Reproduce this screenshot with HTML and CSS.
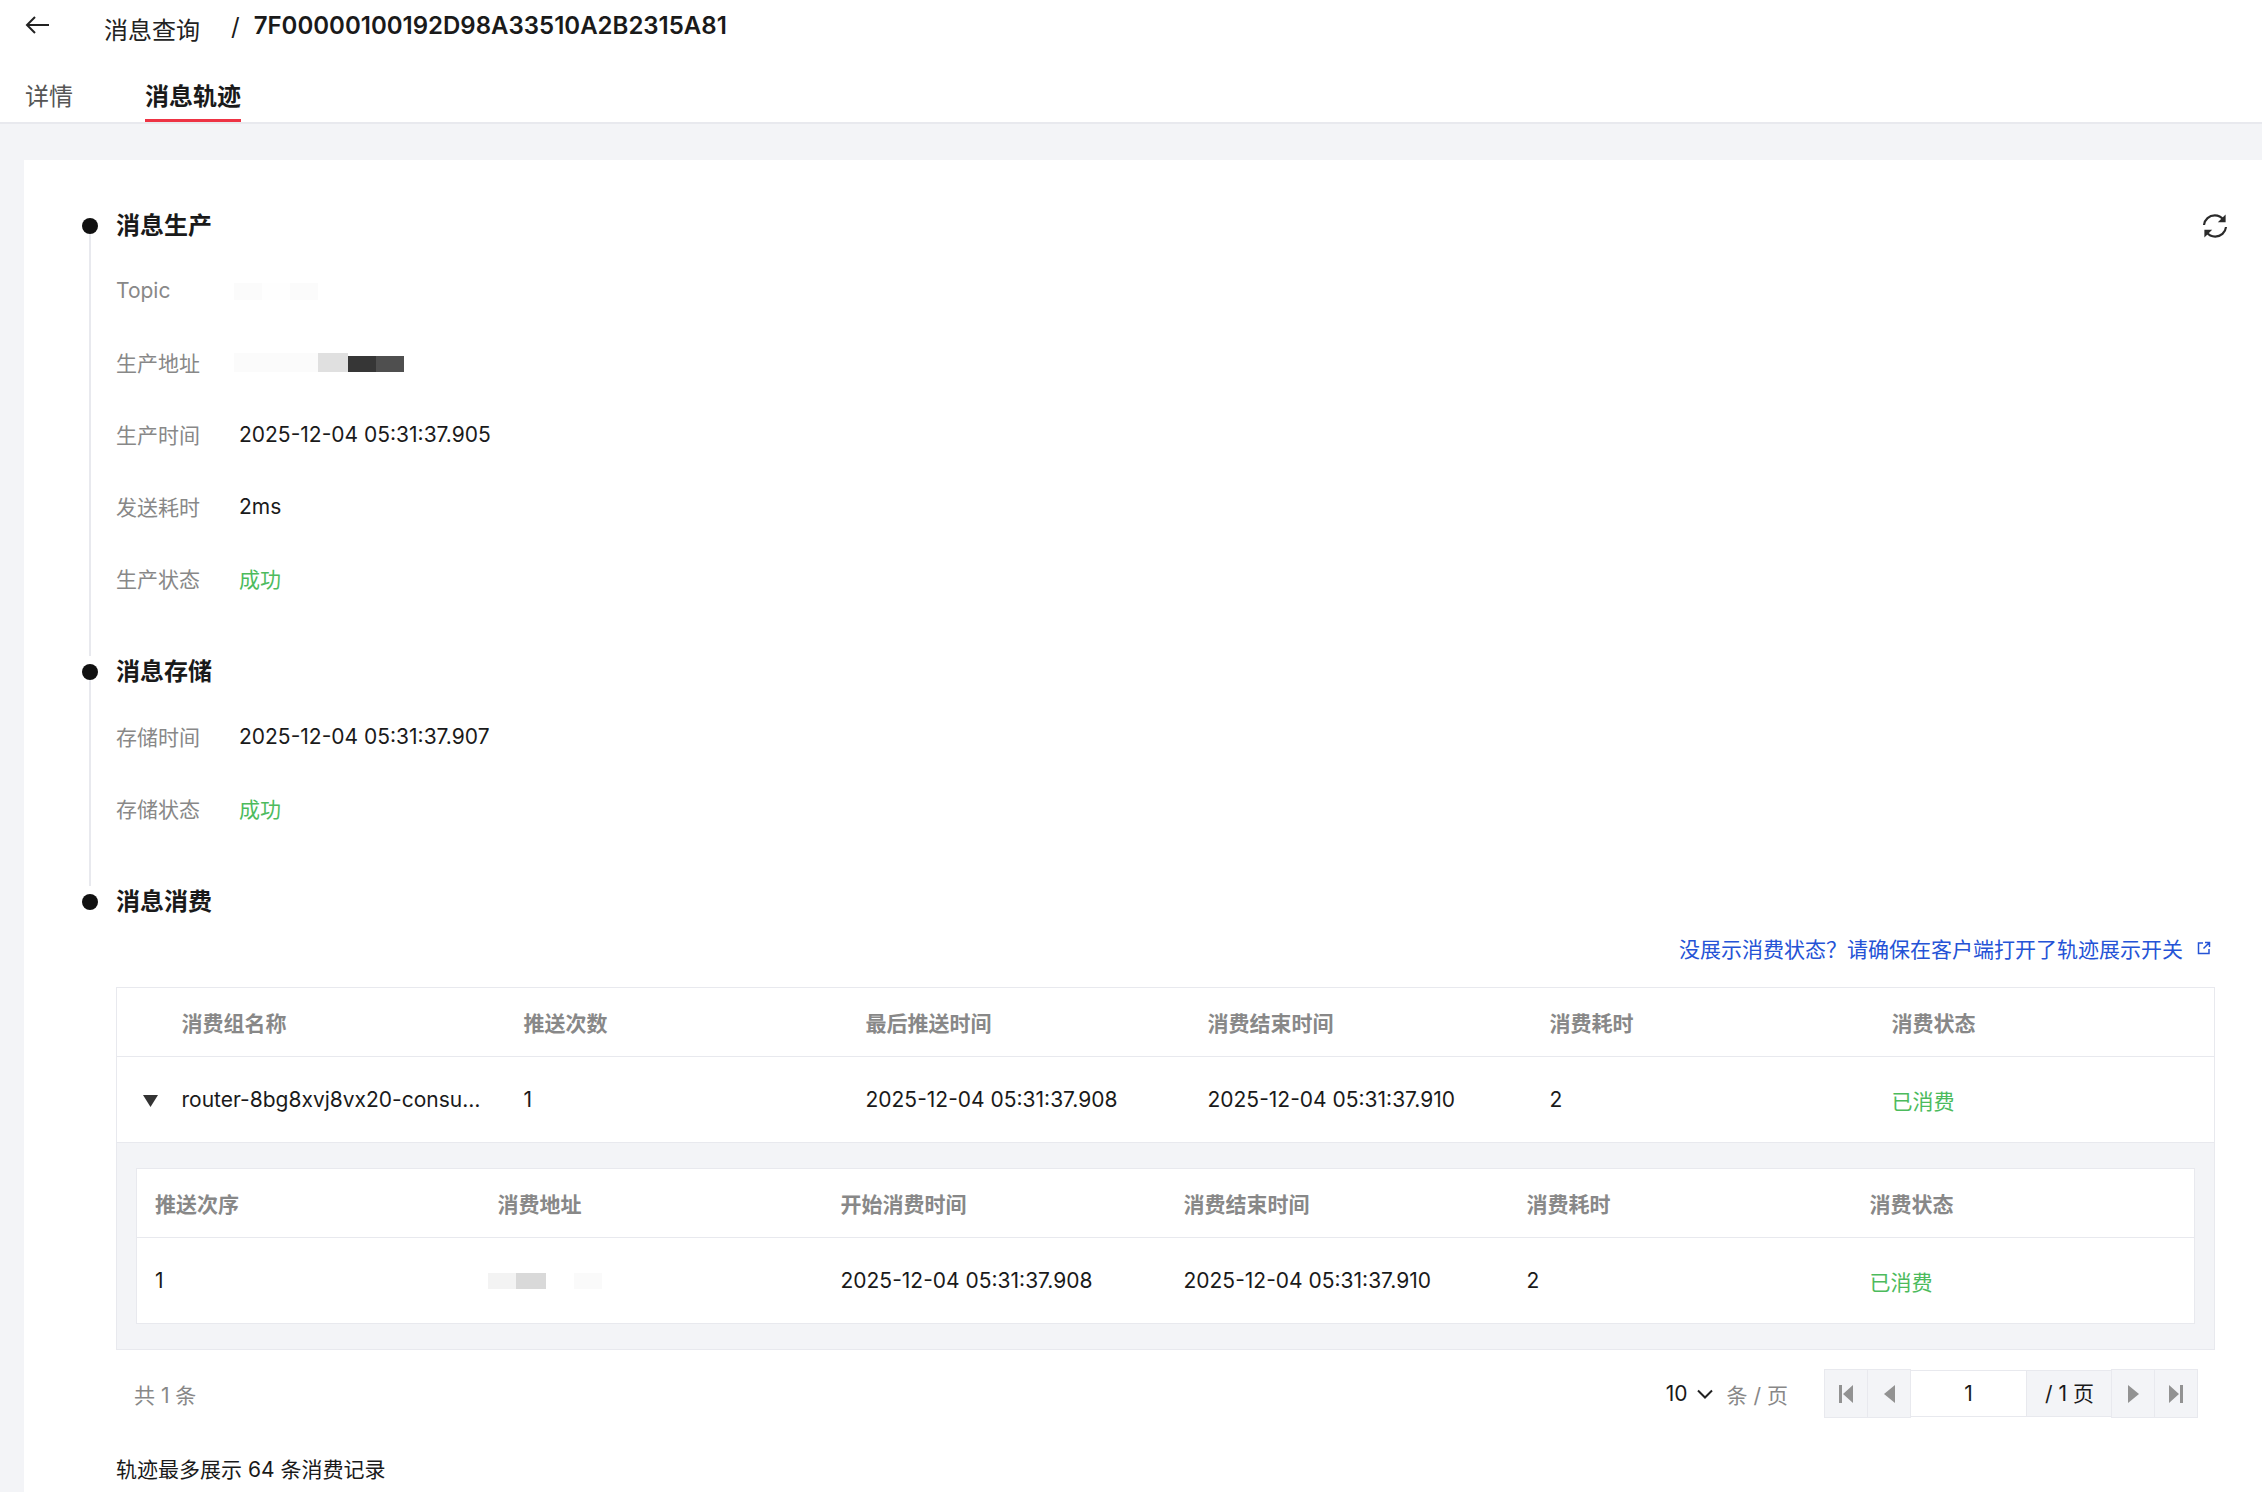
FILE: index.html
```html
<!DOCTYPE html>
<html lang="zh-CN">
<head>
  <meta charset="UTF-8" />
  <title>消息轨迹</title>
  <link rel="stylesheet" href="styles.css">
</head>
<body>
  <header class="page-head">
    <div class="crumbs">
      <svg class="back-icon" viewBox="0 0 24 20" width="24" height="20" fill="none" stroke="#222" stroke-width="2"><path d="M24 10H2M10 2l-8 8 8 8"/></svg>
      <span class="crumb-parent">消息查询</span>
      <span class="crumb-sep">/</span>
      <span class="crumb-id">7F00000100192D98A33510A2B2315A81</span>
    </div>
    <nav class="tabs">
      <a class="tab">详情</a>
      <a class="tab active">消息轨迹</a>
    </nav>
  </header>

  <main class="content">
    <section class="card">
      <svg class="refresh-icon" viewBox="0 0 26 26" width="26" height="26" fill="none" stroke="#2b2b2b" stroke-width="2.2">
        <path d="M2 12C2.6 6.4 7.2 2.4 12.8 2.4c3.600 0 6.700 1.700 8.700 4.400"/>
        <path d="M24 14c-.6 5.600-5.200 9.600-10.800 9.600-3.600 0-6.700-1.700-8.700-4.400"/>
        <path d="M23.600 1.500v7.800h-7.800z" fill="#2b2b2b" stroke="none"/>
        <path d="M2.400 24.500v-7.800h7.800z" fill="#2b2b2b" stroke="none"/>
      </svg>

      <div class="step">
        <div class="rail"><i class="dot"></i><i class="line"></i></div>
        <div class="step-body">
          <h2 class="step-title">消息生产</h2>
          <div class="row">
            <span class="label">Topic</span>
            <span class="mosaic mosaic-topic"><i></i><i></i><i></i></span>
          </div>
          <div class="row">
            <span class="label">生产地址</span>
            <span class="mosaic mosaic-addr"><i></i><i></i><i></i><i></i></span>
          </div>
          <div class="row"><span class="label">生产时间</span><span class="value">2025-12-04 05:31:37.905</span></div>
          <div class="row"><span class="label">发送耗时</span><span class="value">2ms</span></div>
          <div class="row"><span class="label">生产状态</span><span class="value ok">成功</span></div>
        </div>
      </div>

      <div class="step">
        <div class="rail"><i class="dot"></i><i class="line"></i></div>
        <div class="step-body">
          <h2 class="step-title">消息存储</h2>
          <div class="row"><span class="label">存储时间</span><span class="value">2025-12-04 05:31:37.907</span></div>
          <div class="row"><span class="label">存储状态</span><span class="value ok">成功</span></div>
        </div>
      </div>

      <div class="step last">
        <div class="rail"><i class="dot"></i></div>
        <div class="step-body">
          <h2 class="step-title">消息消费</h2>
          <div class="tip-row">
            <a class="tip-link">没展示消费状态？请确保在客户端打开了轨迹展示开关</a>
            <svg class="link-icon" viewBox="0 0 14 14" width="14" height="14" fill="none" stroke="#2553d6" stroke-width="1.500"><path d="M6 2H1.500v10.500H12V8M8 1.500h4.500V6M12.500 1.500L6.500 7.500"/></svg>
          </div>

          <table class="grid outer">
            <colgroup><col class="c-exp"><col class="c-w"><col class="c-w"><col class="c-w"><col class="c-w"><col class="c-w"><col></colgroup>
            <thead>
              <tr><th></th><th>消费组名称</th><th>推送次数</th><th>最后推送时间</th><th>消费结束时间</th><th>消费耗时</th><th>消费状态</th></tr>
            </thead>
            <tbody>
              <tr>
                <td class="exp"><svg viewBox="0 0 15 12" width="15" height="12"><path d="M0 0h15L7.500 12z" fill="#333"/></svg></td>
                <td><div class="ellipsis">router-8bg8xvj8vx20-consumer-group</div></td>
                <td>1</td>
                <td>2025-12-04 05:31:37.908</td>
                <td>2025-12-04 05:31:37.910</td>
                <td>2</td>
                <td class="ok">已消费</td>
              </tr>
              <tr class="expanded">
                <td colspan="7">
                  <table class="grid inner">
                    <colgroup><col class="n-1"><col class="n-w"><col class="n-w"><col class="n-w"><col class="n-w"><col></colgroup>
                    <thead>
                      <tr><th>推送次序</th><th>消费地址</th><th>开始消费时间</th><th>消费结束时间</th><th>消费耗时</th><th>消费状态</th></tr>
                    </thead>
                    <tbody>
                      <tr>
                        <td>1</td>
                        <td><span class="mosaic mosaic-ip"><i></i><i></i><i></i></span></td>
                        <td>2025-12-04 05:31:37.908</td>
                        <td>2025-12-04 05:31:37.910</td>
                        <td>2</td>
                        <td class="ok">已消费</td>
                      </tr>
                    </tbody>
                  </table>
                </td>
              </tr>
            </tbody>
          </table>

          <div class="table-foot">
            <span class="total">共 1 条</span>
            <div class="size-picker">
              <span class="size-num">10</span>
              <svg viewBox="0 0 16 10" width="16" height="10" fill="none" stroke="#222" stroke-width="2"><path d="M1 1.500l7 7 7-7"/></svg>
              <span class="size-unit">条 / 页</span>
            </div>
            <div class="pager">
              <button class="pg-btn"><svg viewBox="0 0 14 18" width="14" height="18" fill="#929292"><path d="M0 0h3v18H0zM14 0v18L4 9z"/></svg></button>
              <button class="pg-btn"><svg viewBox="0 0 11 18" width="11" height="18" fill="#929292"><path d="M11 0v18L0 9z"/></svg></button>
              <div class="pg-input">1</div>
              <div class="pg-total">/ 1 页</div>
              <button class="pg-btn"><svg viewBox="0 0 11 18" width="11" height="18" fill="#929292"><path d="M0 0v18l11-9z"/></svg></button>
              <button class="pg-btn"><svg viewBox="0 0 14 18" width="14" height="18" fill="#929292"><path d="M11 0h3v18h-3zM0 0v18l10-9z"/></svg></button>
            </div>
          </div>

          <p class="note">轨迹最多展示 64 条消费记录</p>
        </div>
      </div>
    </section>
  </main>
</body>
</html>
```

FILE: styles.css
```css
:root {
  --bg-page: #f3f4f7;
  --border: #e8e9ee;
  --text: #1a1a1a;
  --text-grey: #888888;
  --green: #4cbb5c;
  --blue: #2553d6;
  --red: #ee3344;
}
*, *::before, *::after {
  box-sizing: border-box;
}
html, body {
  margin: 0;
  height: 100%;
}
body {
  display: flex;
  flex-direction: column;
  height: 1492px;
  overflow: hidden;
  background: var(--bg-page);
  color: var(--text);
  font-family: Inter, "Noto Sans CJK SC", sans-serif;
  font-size: 21px;
}

/* header */
.page-head {
  height: 124px;
  background: #fff;
  border-bottom: 2px solid var(--border);
}
.crumbs {
  display: flex;
  align-items: flex-start;
  height: 72px;
  padding-left: 25px;
}
.back-icon {
  margin-top: 15px;
}
.crumb-parent {
  margin: 13px 0 0 55px;
  font-size: 24px;
  line-height: 36px;
  color: #222;
}
.crumb-sep {
  margin: 9px 0 0 31px;
  font-size: 24px;
  line-height: 36px;
}
.crumb-id {
  margin: 8px 0 0 14px;
  font-size: 24px;
  line-height: 36px;
  font-weight: 600;
}
.tabs {
  display: flex;
  gap: 72px;
  padding-left: 25px;
}
.tab {
  height: 50px;
  font-size: 24px;
  line-height: 50px;
  color: #555;
  margin-top: 0;
}
.tab.active {
  color: var(--text);
  font-weight: 600;
  border-bottom: 3px solid var(--red);
}

/* card + timeline */
.content {
  flex: 1;
  padding: 36px 0 0 24px;
  min-height: 0;
}
.card {
  position: relative;
  height: 100%;
  padding: 50px 47px 0 58px;
  background: #fff;
}
.refresh-icon {
  position: absolute;
  top: 53px;
  right: 34px;
}
.step {
  display: flex;
  gap: 18px;
  padding-bottom: 0;
}
.rail {
  display: flex;
  flex-direction: column;
  align-items: center;
  width: 16px;
  flex: none;
  padding-top: 8px;
}
.dot {
  display: block;
  width: 16px;
  height: 16px;
  border-radius: 50%;
  background: #111;
}
.line {
  display: block;
  flex: 1;
  width: 2px;
  background: var(--border);
}
.step-body {
  flex: 1;
  min-width: 0;
  padding-bottom: 42px;
}
.step.last .step-body {
  padding-bottom: 0;
}
.step-title {
  margin: 0 0 12px;
  font-size: 24px;
  line-height: 32px;
  font-weight: 700;
}
.row {
  display: flex;
  align-items: center;
  height: 72px;
}
.label {
  width: 123px;
  color: var(--text-grey);
}
.ok {
  color: var(--green);
}

/* masked values */
.mosaic {
  display: flex;
  position: relative;
}
.mosaic i {
  display: block;
}
.mosaic-topic {
  margin-left: -5px;
  margin-top: 3px;
  height: 17px;
}
.mosaic-topic i {
  width: 28px;
  background: #fbfbfb;
}
.mosaic-topic i:nth-child(2) {
  background: #fefefe;
}
.mosaic-addr {
  margin-left: -5px;
  height: 19px;
}
.mosaic-addr i:nth-child(1) {
  width: 84px;
  background: #fbfbfb;
}
.mosaic-addr i:nth-child(2) {
  width: 30px;
  background: #e0e0e0;
}
.mosaic-addr i:nth-child(3) {
  width: 28px;
  margin-top: 3px;
  background: #363636;
}
.mosaic-addr i:nth-child(4) {
  width: 28px;
  margin-top: 3px;
  background: #4f4f4f;
}
.mosaic-ip {
  height: 16px;
  margin-left: -10px;
}
.mosaic-ip i {
  width: 28px;
  background: #f3f3f3;
}
.mosaic-ip i:nth-child(2) {
  width: 30px;
  background: #d9d9d9;
}
.mosaic-ip i:nth-child(3) {
  margin-left: 28px;
  background: #fafafa;
}

/* consume table */
.tip-row {
  display: flex;
  justify-content: flex-end;
  align-items: center;
  gap: 14px;
  height: 36px;
  padding-right: 4px;
  margin-top: 3px;
  margin-bottom: 21px;
}
.tip-link {
  color: var(--blue);
}
.grid {
  width: 100%;
  table-layout: fixed;
  border-collapse: collapse;
  background: #fff;
}
.grid, .grid th, .grid td {
  border: 1px solid var(--border);
  border-left-width: 0;
  border-right-width: 0;
}
.grid.outer, .grid.inner {
  border-left-width: 1px;
  border-right-width: 1px;
}
.grid th {
  height: 69px;
  padding: 0;
  text-align: left;
  font-weight: 600;
  color: var(--text-grey);
}
.grid td {
  height: 86px;
  padding: 0;
}
.c-exp {
  width: 65px;
}
.c-w {
  width: 342px;
}
.exp {
  padding-left: 26px !important;
}
.ellipsis {
  width: 304px;
  overflow: hidden;
  white-space: nowrap;
  text-overflow: ellipsis;
}
.grid .expanded > td {
  padding: 25px 19px 25px 19px;
  background: var(--bg-page);
}
.inner .n-1 {
  width: 361px;
}
.n-w {
  width: 343px;
}
.inner th:first-child, .inner td:first-child {
  padding-left: 18px;
}

/* table footer */
.table-foot {
  display: flex;
  align-items: center;
  height: 49px;
  margin-top: 19px;
  padding: 0 17px 0 18px;
}
.total {
  flex: 1;
  color: var(--text-grey);
}
.size-picker {
  display: flex;
  align-items: center;
  gap: 9px;
  margin-right: 37px;
}
.size-unit {
  margin-left: 5px;
  color: var(--text-grey);
}
.pager {
  display: flex;
  align-items: center;
}
.pg-btn {
  display: flex;
  align-items: center;
  justify-content: center;
  width: 44px;
  height: 49px;
  padding: 0;
  margin-left: -1px;
  background: var(--bg-page);
  border: 1px solid var(--border);
}
.pg-input {
  width: 115px;
  height: 47px;
  line-height: 45px;
  text-align: center;
  background: #fff;
  border: 1px solid var(--border);
  border-left: 0;
  border-right: 0;
}
.pg-total {
  width: 86px;
  height: 47px;
  line-height: 45px;
  text-align: center;
  background: var(--bg-page);
  border: 1px solid var(--border);
  border-right: 0;
}
.note {
  margin: 36px 0 0;
  line-height: 32px;
}
```
